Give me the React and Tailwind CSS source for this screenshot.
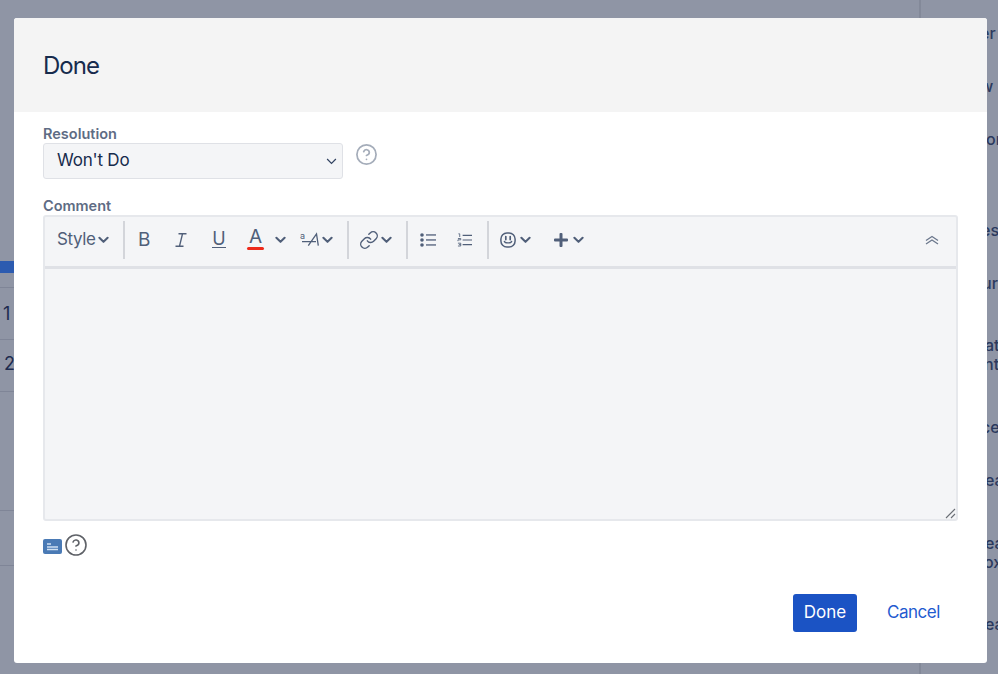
import React from "react";
import { CircleHelp, Link } from "lucide-react";

const rightRows = [
  { text: "er", mt: "mt-[24px]", off: "-ml-[7px]" },
  { text: "w", mt: "mt-[34px]", off: "-ml-[7px]" },
  { text: "on", mt: "mt-[34px]", off: "-ml-[1px]" },
  { text: "es", mt: "mt-[72px]", off: "-ml-[6px]" },
  { text: "ur", mt: "mt-[34px]", off: "-ml-[5px]" },
  { text: "at", mt: "mt-[43px]", off: "-ml-[2px]" },
  { text: "nt", mt: "mt-[0px]", off: "-ml-[3px]" },
  { text: "ce", mt: "mt-[44px]", off: "-ml-[6px]" },
  { text: "ea", mt: "mt-[34px]", off: "-ml-[2px]" },
  { text: "ea", mt: "mt-[44px]", off: "-ml-[2px]" },
  { text: "ox", mt: "mt-[0px]", off: "-ml-[3px]" },
  { text: "ea", mt: "mt-[43px]", off: "-ml-[2px]" },
];

function Chevron({ className = "" }) {
  return (
    <svg viewBox="0 0 12 8" className={`h-[8px] w-[11px] shrink-0 ${className}`} fill="none" stroke="#505f79" strokeWidth="2.2" strokeLinecap="round" strokeLinejoin="round">
      <path d="M1.5 1.5 6 6l4.5-4.5" />
    </svg>
  );
}

function Separator({ className = "" }) {
  return <div className={`h-[38px] w-[2px] shrink-0 bg-[#d3d5da] ${className}`} />;
}

function BulletList() {
  return (
    <svg viewBox="0 0 16 14" className="h-[14px] w-[16px]" fill="#505f79">
      <circle cx="2" cy="2" r="1.8" />
      <circle cx="2" cy="7" r="1.8" />
      <circle cx="2" cy="12" r="1.8" />
      <rect x="6" y="1.3" width="10" height="1.3" />
      <rect x="6" y="6.3" width="10" height="1.3" />
      <rect x="6" y="11.3" width="10" height="1.3" />
    </svg>
  );
}

function NumberList() {
  return (
    <svg viewBox="0 0 16 14" className="h-[14px] w-[15px]" fill="none" stroke="#505f79">
      <path d="M1.5.8h1.4v3.4M1 5.8h3v1.4H1v1.4" strokeWidth="0.9" transform="translate(0 -.4)" />
      <path d="M1 10.2h3v3H1M2 11.7h2" strokeWidth="0.9" transform="translate(0 .2)" />
      <path d="M6 2h10M6 7h10M6 12h10" strokeWidth="1.3" />
    </svg>
  );
}

function Smile() {
  return (
    <svg viewBox="0 0 16 16" className="h-[16px] w-[16px]" fill="none" stroke="#505f79">
      <rect x=".9" y=".9" width="14.2" height="14.2" rx="6" strokeWidth="1.5" />
      <path d="M5.8 4.6v3M10.2 4.6v3" strokeWidth="1.7" strokeLinecap="round" />
      <path d="M4.4 9.4c.7 2 6.5 2 7.2 0" strokeWidth="1.4" strokeLinecap="round" />
    </svg>
  );
}

function Toolbar() {
  return (
    <div className="flex h-[52px] items-center border-b-[3px] border-[#dfe1e6] pb-[4px] pl-[12px] text-[#505f79]">
      <span className="w-[41px] text-[17px] tracking-[-0.4px]">Style</span>
      <Chevron />
      <Separator className="ml-[14px]" />
      <span className="ml-[13px] w-[12px] text-[19px] leading-none">B</span>
      <svg viewBox="0 0 12 14" className="ml-[25px] h-[14px] w-[12px]" fill="none" stroke="#505f79" strokeWidth="1.4">
        <path d="M3.5.8h8M.5 13.2h8M7.5.8l-3 12.4" />
      </svg>
      <div className="ml-[25px] flex w-[14px] flex-col items-center">
        <span className="text-[18px] leading-[15px]">U</span>
        <div className="mt-[1px] h-[1.5px] w-[14px] bg-[#505f79]" />
      </div>
      <div className="ml-[21px] flex w-[17px] flex-col items-center">
        <span className="text-[19px] leading-[16px]">A</span>
        <div className="mt-[2px] h-[3px] w-[17px] rounded-sm bg-[#ee2a1b]" />
      </div>
      <Chevron className="ml-[11px]" />
      <svg viewBox="0 0 22 16" className="ml-[14px] h-[16px] w-[22px]" fill="none" stroke="#505f79">
        <text x="0" y="7" fontSize="9" fill="#505f79" stroke="none">a</text>
        <path d="M8.3 13.7 16.5 2l1.8 11.7M2 9.7h14" strokeWidth="1.3" />
      </svg>
      <Chevron />
      <Separator className="ml-[14px]" />
      <Link size={20} strokeWidth={1.7} className="ml-[10px]" />
      <Chevron className="ml-[2px]" />
      <Separator className="ml-[14px]" />
      <div className="ml-[12px]"><BulletList /></div>
      <div className="ml-[21px]"><NumberList /></div>
      <Separator className="ml-[15px]" />
      <div className="ml-[11px]"><Smile /></div>
      <Chevron className="ml-[4px]" />
      <svg viewBox="0 0 14 14" className="ml-[23px] h-[14px] w-[14px]" fill="#505f79">
        <path d="M5.5 1a1 1 0 0 1 1-1h1a1 1 0 0 1 1 1v4.5H13a1 1 0 0 1 1 1v1a1 1 0 0 1-1 1H8.5V13a1 1 0 0 1-1 1h-1a1 1 0 0 1-1-1V8.5H1a1 1 0 0 1-1-1v-1a1 1 0 0 1 1-1h4.5z" />
      </svg>
      <Chevron className="ml-[5px]" />
      <svg viewBox="0 0 14 10" className="ml-auto mr-[17px] h-[10px] w-[14px]" fill="none" stroke="#6b778c" strokeWidth="1.3">
        <path d="M1 5.5 7 1.5l6 4M1 9l6-4 6 4" />
      </svg>
    </div>
  );
}

export default function App() {
  return (
    <div className="flex h-[674px] w-[998px] overflow-hidden bg-[#8f95a5] font-['Inter','Liberation_Sans',sans-serif]">
      <div className="w-[14px] shrink-0 overflow-hidden">
        <div className="mt-[261px] h-[12px] bg-[#2c5bb0]" />
        <div className="mt-[14px] h-[52px] border-t border-[#7f8597] pl-[3px] pt-[15px] text-[18px] leading-[22px] text-[#1d2b4f]">1</div>
        <div className="h-[53px] border-y border-[#7f8597] pl-[4px] pt-[13px] text-[18px] leading-[22px] text-[#1d2b4f]">2</div>
        <div className="mt-[118px] h-[56px] border-y border-[#7f8597]" />
      </div>

      <div className="w-[973px] shrink-0">
        <div className="h-[18px] w-[907px] border-r-2 border-[#838999]" />
        <div className="flex h-[645px] flex-col overflow-hidden rounded-[3px] bg-white">
          <div className="flex h-[94px] shrink-0 items-center bg-[#f4f4f4] px-[29px] pt-[2px]">
            <h1 className="text-[24px] font-normal tracking-[-1px] text-[#172b4d]">Done</h1>
          </div>

          <div className="flex flex-col px-[29px] pt-[13px]">
            <label className="text-[14.5px] leading-[18px] font-semibold text-[#5e6c84]">Resolution</label>
            <div className="flex items-start">
              <div className="flex h-[36px] w-[300px] items-center justify-between rounded-[3px] border border-[#dfe1e6] bg-[#f4f5f7] pl-[13px] pr-[5px] text-[17px] tracking-[-0.2px] text-[#172b4d]">
                <span>Won't Do</span>
                <svg viewBox="0 0 12 8" className="h-[7px] w-[11px]" fill="none" stroke="#344563" strokeWidth="1.4">
                  <path d="M1 1.2 6 6.2l5-5" />
                </svg>
              </div>
              <CircleHelp size={23} strokeWidth={1.8} className="ml-[12px] text-[#a5adba]" />
            </div>

            <label className="mt-[18px] text-[14.5px] leading-[18px] font-semibold text-[#5e6c84]">Comment</label>
            <div className="h-[306px] w-[915px] rounded-[3px] border-2 border-[#e6e8ec] bg-[#f4f5f7]">
              <Toolbar />
              <div className="relative h-[250px]">
                <svg viewBox="0 0 12 12" className="absolute bottom-[0px] right-[0px] h-[12px] w-[12px]" fill="none" stroke="#6b6f76" strokeWidth="1.1">
                  <path d="M2 11 11 2M7 11l4-4" />
                </svg>
              </div>
            </div>

            <div className="mt-[12px] flex items-center">
              <svg viewBox="0 0 19 15" className="mt-[2px] h-[15px] w-[19px]">
                <rect width="19" height="15" rx="2" fill="#4a7ab5" />
                <path d="M4 5h4M4 8h11M4 10.5h11" stroke="#cfe0f2" strokeWidth="1.3" />
              </svg>
              <CircleHelp size={24} strokeWidth={1.6} className="ml-[2px] text-[#5f6268]" />
            </div>
          </div>

          <div className="mt-auto mb-[31px] flex items-center justify-end pr-[48px]">
            <button className="h-[38px] w-[64px] rounded-[3px] bg-[#1b53c4] text-[17px] text-white">Done</button>
            <button className="ml-[30px] w-[52px] text-[17px] tracking-[-0.5px] whitespace-nowrap text-[#1f5bd0]">Cancel</button>
          </div>
        </div>
        <div className="h-[11px] w-[907px] border-r-2 border-[#838999]" />
      </div>

      <div className="flex-1 overflow-hidden text-[16px] leading-[19px] font-medium whitespace-nowrap text-[#2b3a5e]">
        {rightRows.map((row, i) => (
          <div key={i} className={`${row.mt} ${row.off}`}>{row.text}</div>
        ))}
      </div>
    </div>
  );
}
